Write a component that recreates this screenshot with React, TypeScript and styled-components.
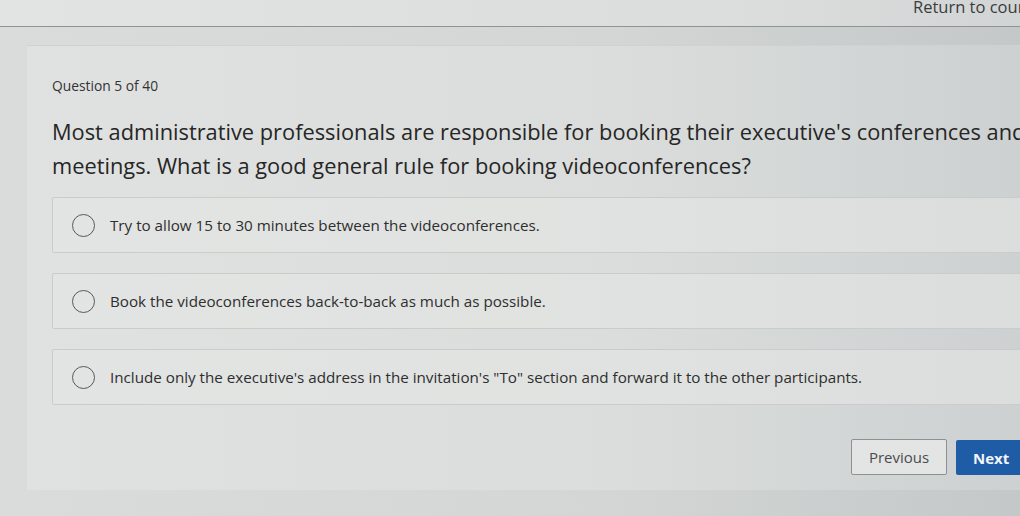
import React from "react";
import styled, { createGlobalStyle } from "styled-components";

const Global = createGlobalStyle`
  html, body { margin: 0; padding: 0; overflow: hidden; }
  body {
    width: 1020px; height: 516px;
    background: linear-gradient(90deg, #d9dcdb 0%, #d3d6d5 60%, #c4c8c8 100%);
    font-family: "Open Sans", "Noto Sans", sans-serif;
    color: #2a2a2a;
  }
`;

const Frame = styled.div`
  width: 1100px;
  height: 516px;
  display: flex;
  flex-direction: column;
`;

const TopBar = styled.header`
  height: 26px;
  border-bottom: 1px solid #8f9392;
  background: linear-gradient(90deg, #e2e4e3 0%, #dadddc 70%, #cfd2d2 100%);
  display: flex;
  align-items: flex-start;
  padding-left: 913px;
`;

const ReturnLink = styled.span`
  font-size: 16.5px;
  line-height: 14px;
  color: #3a3c3c;
  white-space: nowrap;
`;

const Card = styled.main`
  margin: 18px 0 0 27px;
  height: 445px;
  background: linear-gradient(90deg, #e0e2e1 0%, #dadddc 55%, #cdd1d1 92%);
  border-top: 1px solid #cfd2d1;
  padding: 31px 0 0 25px;
  box-sizing: border-box;
  display: flex;
  flex-direction: column;
`;

const Counter = styled.div`
  font-size: 13.8px;
  color: #333;
  line-height: 18px;
`;

const Question = styled.h1`
  margin: 20px 0 0 0;
  font-size: 21.8px;
  font-weight: 400;
  line-height: 34px;
  color: #262626;
  white-space: nowrap;
`;

const Options = styled.div`
  margin-top: 14px;
  display: flex;
  flex-direction: column;
  gap: 20px;
`;

const Option = styled.label`
  height: 56px;
  box-sizing: border-box;
  border: 1px solid #c9cccb;
  border-radius: 2px;
  background: rgba(228, 230, 229, 0.6);
  display: flex;
  align-items: center;
  padding-left: 19px;
  gap: 15px;
  font-size: 15.2px;
  color: #2e2e2e;
  white-space: nowrap;
`;

const Radio = styled.span`
  width: 23px;
  height: 23px;
  border-radius: 50%;
  border: 1.5px solid #575959;
  box-sizing: border-box;
  flex: none;
`;

const Actions = styled.div`
  margin-top: 34px;
  display: flex;
  gap: 9px;
  padding-left: 799px;
`;

const PrevButton = styled.button`
  width: 96px;
  height: 36px;
  background: #e3e5e4;
  border: 1px solid #8e9190;
  border-radius: 2px;
  font-family: inherit;
  font-size: 15px;
  color: #4a4c4c;
`;

const NextButton = styled.button`
  width: 72px;
  height: 35px;
  margin-top: 1px;
  background: #1f5ca6;
  border: none;
  border-radius: 2px;
  font-family: inherit;
  font-size: 15px;
  font-weight: 700;
  color: #f2f5f8;
  text-align: left;
  padding-left: 17px;
`;

const answers = [
  "Try to allow 15 to 30 minutes between the videoconferences.",
  "Book the videoconferences back-to-back as much as possible.",
  "Include only the executive's address in the invitation's \"To\" section and forward it to the other participants.",
];

export default function App() {
  return (
    <>
      <Global />
      <Frame>
        <TopBar>
          <ReturnLink>Return to course</ReturnLink>
        </TopBar>
        <Card>
          <Counter>Question 5 of 40</Counter>
          <Question>
            Most administrative professionals are responsible for booking their executive's conferences and
            <br />
            meetings. What is a good general rule for booking videoconferences?
          </Question>
          <Options>
            {answers.map((a) => (
              <Option key={a}>
                <Radio />
                {a}
              </Option>
            ))}
          </Options>
          <Actions>
            <PrevButton>Previous</PrevButton>
            <NextButton>Next</NextButton>
          </Actions>
        </Card>
      </Frame>
    </>
  );
}
